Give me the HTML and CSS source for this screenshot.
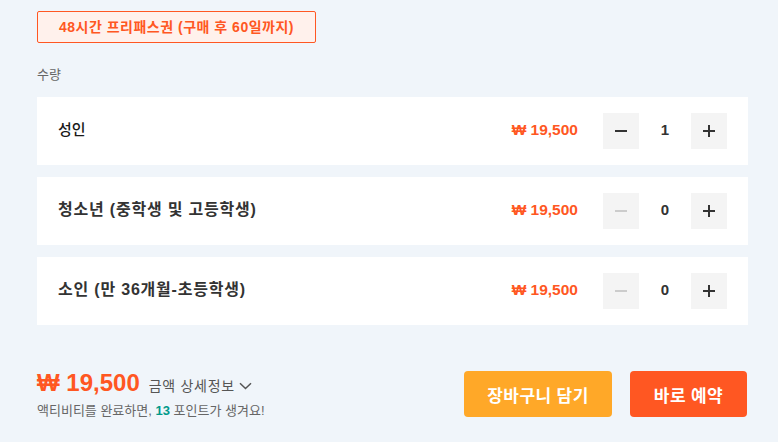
FILE: index.html
```html
<!DOCTYPE html>
<html lang="ko">
<head>
<meta charset="utf-8">
<link rel="stylesheet" href="styles.css">
</head>
<body>
<div class="page">
  <div class="tag">48시간 프리패스권 (구매 후 60일까지)</div>
  <div class="section-label">수량</div>
  <div class="rows">
    <div class="row">
      <div class="row-label plain">성인</div>
      <div class="price">₩ 19,500</div>
      <div class="stepper">
        <button class="step"><span class="minus"></span></button>
        <span class="qty">1</span>
        <button class="step"><span class="plus"></span></button>
      </div>
    </div>
    <div class="row">
      <div class="row-label">청소년 (중학생 및 고등학생)</div>
      <div class="price">₩ 19,500</div>
      <div class="stepper">
        <button class="step disabled"><span class="minus"></span></button>
        <span class="qty">0</span>
        <button class="step"><span class="plus"></span></button>
      </div>
    </div>
    <div class="row">
      <div class="row-label">소인 (만 36개월-초등학생)</div>
      <div class="price">₩ 19,500</div>
      <div class="stepper">
        <button class="step disabled"><span class="minus"></span></button>
        <span class="qty">0</span>
        <button class="step"><span class="plus"></span></button>
      </div>
    </div>
  </div>
  <div class="footer">
    <div class="summary">
      <div class="total-line">
        <span class="total">₩ 19,500</span>
        <span class="detail">금액 상세정보<svg class="chev" width="13" height="8" viewBox="0 0 13 8"><path d="M1 1.2 L6.5 6.5 L12 1.2" fill="none" stroke="#555" stroke-width="1.5"/></svg></span>
      </div>
      <div class="points">액티비티를 완료하면, <b>13</b> 포인트가 생겨요!</div>
    </div>
    <div class="actions">
      <button class="btn cart">장바구니 담기</button>
      <button class="btn book">바로 예약</button>
    </div>
  </div>
</div>
</body>
</html>
```
FILE: styles.css
```css
html, body {
  margin: 0;
  padding: 0;
  background: #f0f5fa;
  font-family: "Liberation Sans", "Noto Sans CJK KR", sans-serif;
  color: #333;
}
.page {
  padding: 11px 30px 0 37px;
}
.tag {
  display: inline-block;
  box-sizing: border-box;
  height: 32px;
  line-height: 30px;
  padding: 0 21px;
  border: 1px solid #ff5722;
  border-radius: 2px;
  background: #fff1ec;
  color: #ff5722;
  font-size: 14px;
  letter-spacing: 0.5px;
  font-weight: bold;
}
.section-label {
  margin-top: 22px;
  line-height: 20px;
  font-size: 13px;
  color: #666;
}
.rows {
  margin-top: 12px;
  display: flex;
  flex-direction: column;
  gap: 12px;
}
.row {
  height: 68px;
  background: #fff;
  display: flex;
  align-items: center;
  padding: 0 21px;
  line-height: 20px;
}
.row-label {
  flex: 1;
  font-size: 16px;
  letter-spacing: 0.8px;
  font-weight: bold;
  color: #333;
  margin-top: -3px;
}
.row-label.plain {
  font-size: 15px;
  letter-spacing: 0;
  font-weight: 500;
  color: #1a1a1a;
}
.price {
  font-size: 15.5px;
  font-weight: bold;
  color: #ff5722;
  margin-right: 25px;
  margin-top: -2px;
}
.stepper {
  display: flex;
  align-items: center;
}
.step {
  width: 36px;
  height: 36px;
  border: 0;
  padding: 0;
  background: #f4f4f4;
  display: flex;
  align-items: center;
  justify-content: center;
}
.minus {
  display: block;
  width: 12px;
  height: 2px;
  background: #333;
}
.step.disabled .minus {
  background: #ccc;
}
.plus {
  display: block;
  width: 12px;
  height: 12px;
  background:
    linear-gradient(#333, #333) center / 12px 2px no-repeat,
    linear-gradient(#333, #333) center / 2px 12px no-repeat;
}
.qty {
  width: 52px;
  text-align: center;
  font-size: 15px;
  font-weight: bold;
  color: #333;
  margin-top: -2px;
}
.footer {
  margin-top: 44px;
  display: flex;
  align-items: center;
  justify-content: space-between;
}
.total-line {
  display: flex;
  align-items: baseline;
}
.total {
  font-size: 24px;
  font-weight: bold;
  color: #ff5722;
  margin-right: 9px;
}
.detail {
  font-size: 14px;
  letter-spacing: 0.7px;
  color: #555;
}
.chev {
  margin-left: 4px;
  vertical-align: 1px;
}
.points {
  margin-top: 3px;
  font-size: 13px;
  color: #666;
}
.points b {
  color: #00998a;
}
.actions {
  display: flex;
  gap: 18px;
  margin-right: 1px;
}
.btn {
  height: 46px;
  border: 0;
  border-radius: 4px;
  color: #fff;
  font-family: inherit;
  font-size: 17px;
  letter-spacing: 0.4px;
  font-weight: bold;
}
.cart {
  width: 148px;
  background: #ffa828;
}
.book {
  width: 117px;
  background: #ff5722;
}
```
